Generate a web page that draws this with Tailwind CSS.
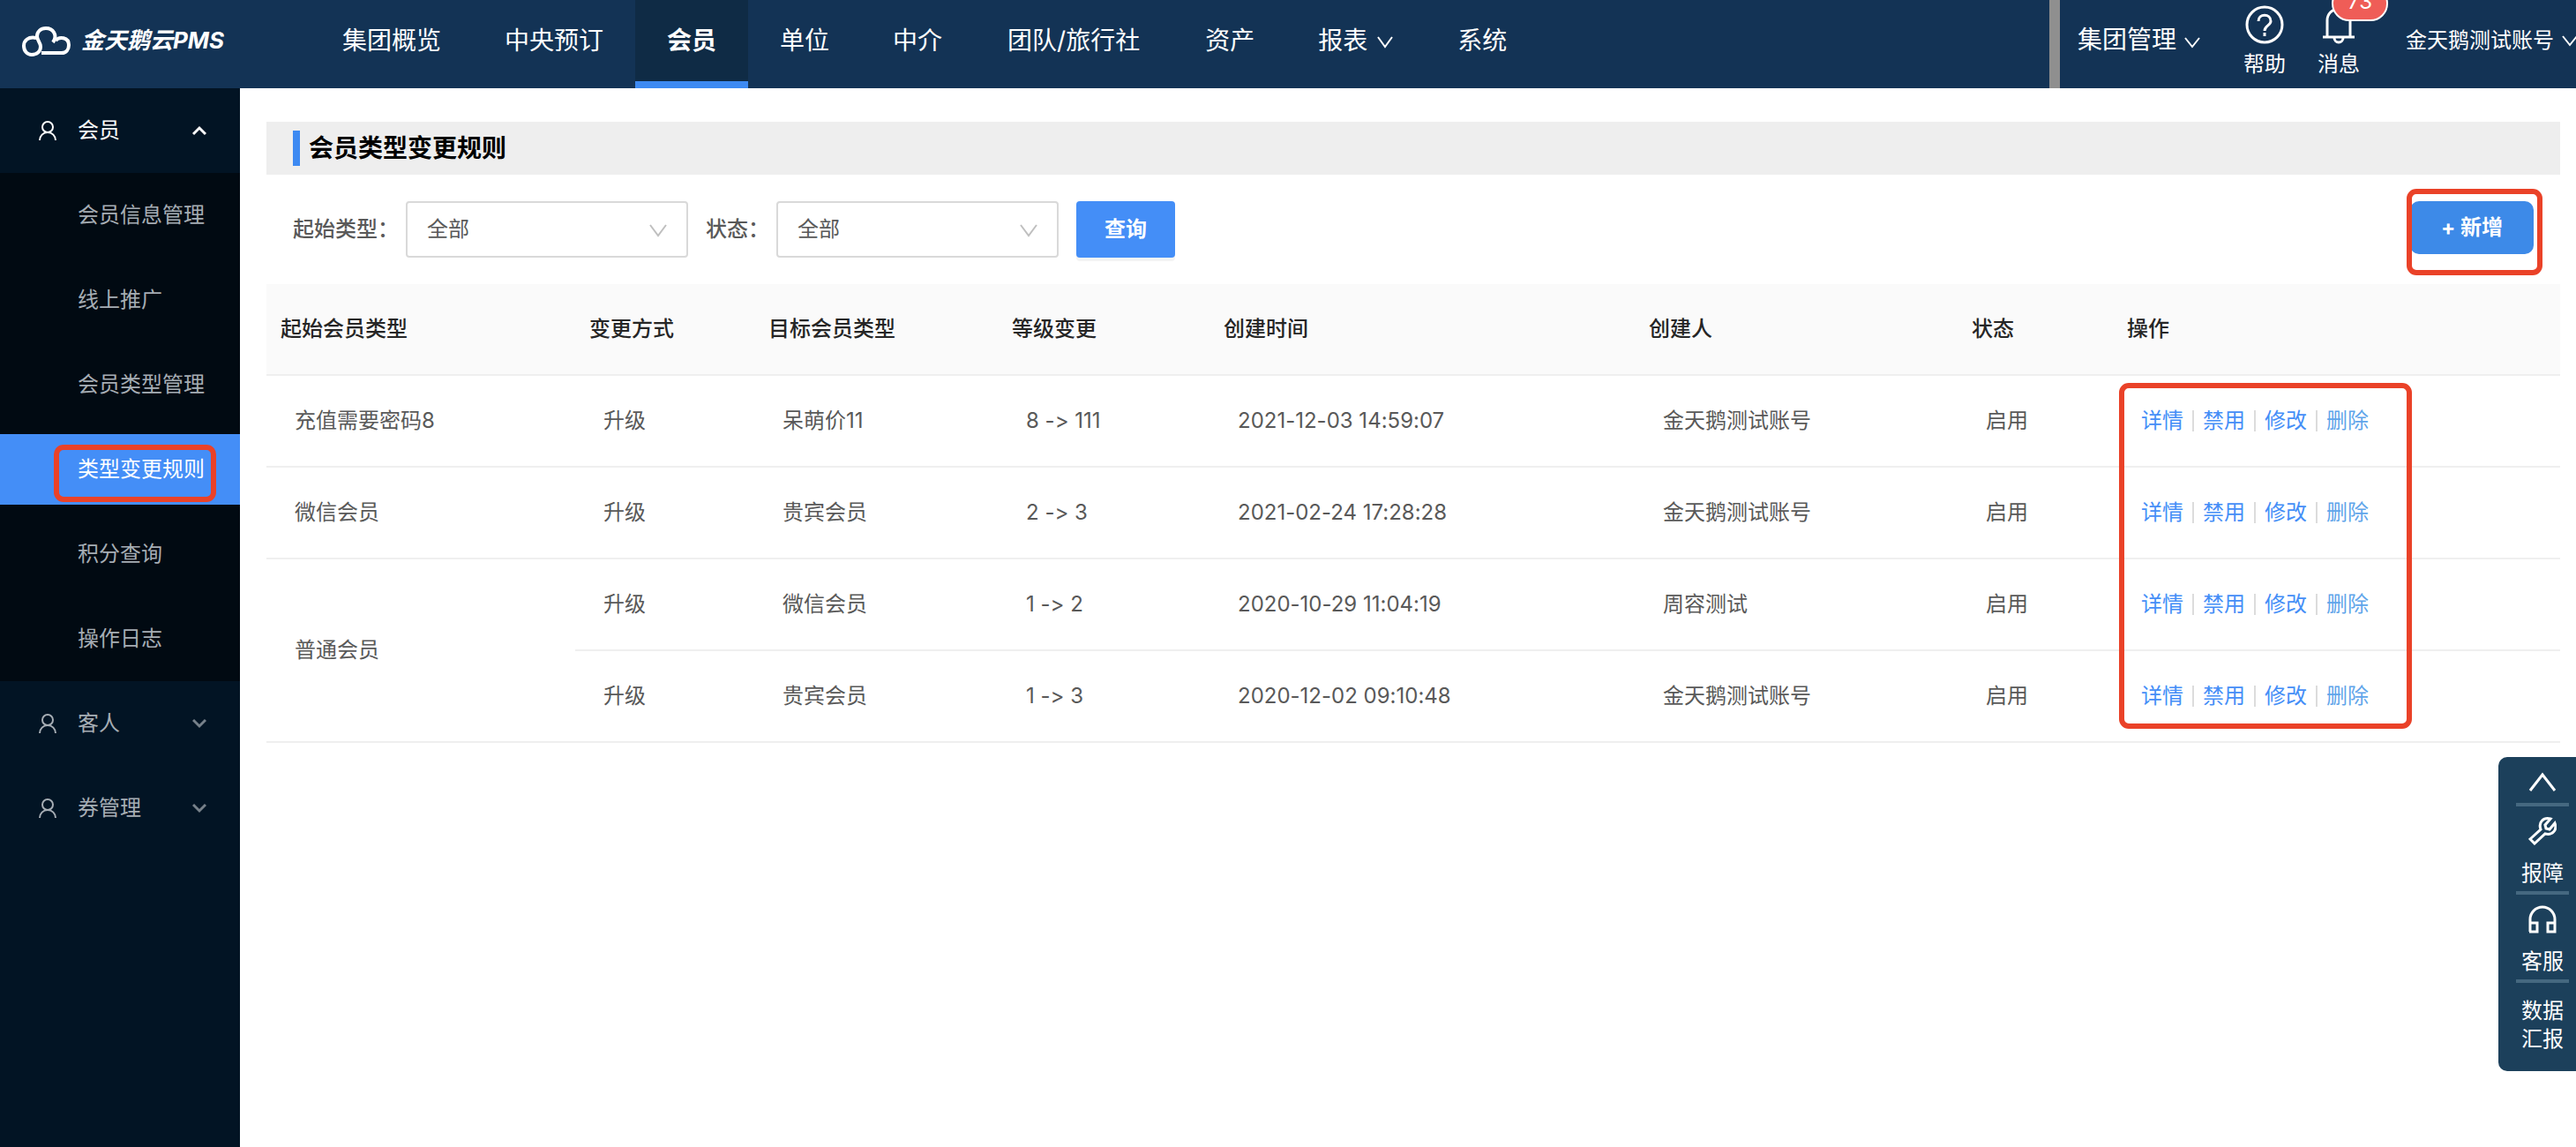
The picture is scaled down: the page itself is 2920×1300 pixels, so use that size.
<!DOCTYPE html>
<html lang="zh-CN">
<head>
    <meta charset="UTF-8">
    <meta name="viewport" content="width=device-width, initial-scale=1.0">
    <title>会员类型变更规则</title>
    <script src="https://cdn.jsdelivr.net/npm/@tailwindcss/browser@4"></script>
</head>
<body class="min-h-screen flex flex-col bg-white text-2xl text-[#595959] font-[Inter,'Noto_Sans_CJK_SC',sans-serif] [font-feature-settings:'calt'_0] overflow-x-hidden">

    <!-- Header -->
    <header class="h-[100px] flex bg-[#133355] text-white text-[28px] whitespace-nowrap">
        <a href="#" class="w-[352px] pl-6 pb-2 flex items-center gap-3">
            <svg class="w-14 h-9" viewBox="0 0 56 36" fill="none" stroke="currentColor" stroke-width="4">
                <path d="M17 15C8 13 3 18 3 24c0 6 4 10 9 10 6 0 10-4 10-9 0-5-4-7-4-12 0-5 4-9 10-9 8 0 14 8 8 16"/>
                <path d="M39 18c4-5 15-4 15 5 0 5-3 9-8 9H23"/>
            </svg>
            <span class="text-[26px] font-bold italic">金天鹅云PMS</span>
        </a>
        <nav class="flex leading-[92px]">
            <a href="#" class="px-9">集团概览</a>
            <a href="#" class="px-9">中央预订</a>
            <a href="#" class="px-9 font-bold bg-[#0f2b45] border-b-8 border-[#3d8af2]">会员</a>
            <a href="#" class="px-9">单位</a>
            <a href="#" class="px-9">中介</a>
            <a href="#" class="px-[38px]">团队/旅行社</a>
            <a href="#" class="px-9">资产</a>
            <a href="#" class="px-9 flex gap-[10px]">报表
                <svg class="w-5 h-[96px]" viewBox="0 0 20 96" fill="none" stroke="currentColor" stroke-width="2"><path d="M2 42l8 11 8-11"/></svg>
            </a>
            <a href="#" class="px-9">系统</a>
        </nav>
        <div class="ml-auto w-[597px] shrink-0 flex border-l-12 border-[#8f8f8f] pl-5">
            <button class="h-[92px] flex items-center gap-2">集团管理
                <svg class="w-5 h-6" viewBox="0 0 20 24" fill="none" stroke="currentColor" stroke-width="2"><path d="M2 9l8 10 8-10"/></svg>
            </button>
            <a href="#" class="ml-12 pt-[6px] flex flex-col items-center gap-[7px] text-2xl">
                <svg class="w-11 h-11" viewBox="0 0 44 44" fill="none" stroke="currentColor" stroke-width="3">
                    <circle cx="22" cy="22" r="20"/>
                    <path d="M15 18c0-9 14-9 14 0 0 5-7 5-7 11"/><path d="M22 31v4"/>
                </svg>
                帮助
            </a>
            <a href="#" class="relative ml-9 pt-[6px] flex flex-col items-center gap-[7px] text-2xl">
                <svg class="w-11 h-11" viewBox="0 0 44 44" fill="none" stroke="currentColor" stroke-width="3">
                    <path d="M4 36h36M9 36V17a13 13 0 0 1 26 0v19M17 37a5 5 0 0 0 10 0"/>
                </svg>
                消息
                <span class="absolute -top-4 left-4 w-16 h-10 rounded-full bg-[#ef5d57] border-2 border-white text-center leading-8">73</span>
            </a>
            <button class="ml-[52px] h-[92px] flex items-center gap-2 text-2xl">金天鹅测试账号
                <svg class="w-5 h-6 shrink-0" viewBox="0 0 20 24" fill="none" stroke="currentColor" stroke-width="2"><path d="M2 7l8 10 8-10"/></svg>
            </button>
        </div>
    </header>

    <div class="flex-1 flex">

        <!-- Sidebar -->
        <aside class="w-[272px] shrink-0 bg-[#021424] text-[#a6adb4]">
            <button class="w-full h-24 pl-11 pr-[38px] flex items-center text-white">
                <svg class="w-5 h-6 mr-6" viewBox="0 0 20 24" fill="none" stroke="currentColor" stroke-width="2"><circle cx="10" cy="8" r="6"/><path d="M1 23a9 9 0 0 1 18 0"/></svg>
                会员
                <svg class="w-4 h-4 ml-auto" viewBox="0 0 16 16" fill="none" stroke="currentColor" stroke-width="3"><path d="M1 12l7-7 7 7"/></svg>
            </button>
            <nav class="py-2 flex flex-col gap-4 bg-[#010a12] leading-[80px]">
                <a href="#" class="pl-[88px]">会员信息管理</a>
                <a href="#" class="pl-[88px]">线上推广</a>
                <a href="#" class="pl-[88px]">会员类型管理</a>
                <a href="#" class="relative pl-[88px] bg-[#448ef7] text-white">类型变更规则
                    <span class="absolute left-[61px] top-3 w-[184px] h-[65px] border-6 border-[#ea4228] rounded-[11px]"></span>
                </a>
                <a href="#" class="pl-[88px]">积分查询</a>
                <a href="#" class="pl-[88px]">操作日志</a>
            </nav>
            <button class="w-full h-24 pl-11 pr-[38px] flex items-center">
                <svg class="w-5 h-6 mr-6" viewBox="0 0 20 24" fill="none" stroke="currentColor" stroke-width="2"><circle cx="10" cy="8" r="6"/><path d="M1 23a9 9 0 0 1 18 0"/></svg>
                客人
                <svg class="w-4 h-4 ml-auto text-[#77818a]" viewBox="0 0 16 16" fill="none" stroke="currentColor" stroke-width="3"><path d="M1 4l7 7 7-7"/></svg>
            </button>
            <button class="w-full h-24 pl-11 pr-[38px] flex items-center">
                <svg class="w-5 h-6 mr-6" viewBox="0 0 20 24" fill="none" stroke="currentColor" stroke-width="2"><circle cx="10" cy="8" r="6"/><path d="M1 23a9 9 0 0 1 18 0"/></svg>
                券管理
                <svg class="w-4 h-4 ml-auto text-[#77818a]" viewBox="0 0 16 16" fill="none" stroke="currentColor" stroke-width="3"><path d="M1 4l7 7 7-7"/></svg>
            </button>
        </aside>

        <!-- Main Content -->
        <main class="flex-1 pt-[38px] pl-[30px] pr-[18px]">
            <div class="h-[60px] pl-[30px] flex items-center bg-[#eeeeee]">
                <h1 class="h-10 pl-[10px] border-l-8 border-[#3d8af2] text-[28px] leading-10 font-bold text-black">会员类型变更规则</h1>
            </div>

            <form class="h-[124px] pl-[30px] pr-[30px] flex items-center">
                <label for="startType" class="mr-2 font-medium">起始类型：</label>
                <div class="relative">
                    <select id="startType" class="w-80 h-16 px-[22px] appearance-none bg-white border-2 border-[#d9d9d9] rounded-sm">
                        <option>全部</option>
                    </select>
                    <svg class="absolute right-6 top-5 w-5 h-6 pointer-events-none" viewBox="0 0 20 24" fill="none" stroke="#bfbfbf" stroke-width="2"><path d="M1 7l9 12 9-12"/></svg>
                </div>
                <label for="status" class="ml-5 mr-2 font-medium">状态：</label>
                <div class="relative">
                    <select id="status" class="w-80 h-16 px-[22px] appearance-none bg-white border-2 border-[#d9d9d9] rounded-sm">
                        <option>全部</option>
                    </select>
                    <svg class="absolute right-6 top-5 w-5 h-6 pointer-events-none" viewBox="0 0 20 24" fill="none" stroke="#bfbfbf" stroke-width="2"><path d="M1 7l9 12 9-12"/></svg>
                </div>
                <button type="button" class="ml-5 w-28 h-16 rounded-sm bg-[#448ef7] text-white font-bold shadow-[0_4px_0_#f4f4f4]">查询</button>
                <div class="relative ml-auto mb-1">
                    <button type="button" class="w-[140px] h-[60px] rounded-[10px] bg-[#3d8ae8] text-white font-bold">+ 新增</button>
                    <span class="absolute -left-1 -top-[14px] w-[154px] h-[98px] border-6 border-[#ea4228] rounded-[11px] pointer-events-none"></span>
                </div>
            </form>

            <div class="relative">
                <table class="w-full table-fixed text-left">
                    <thead>
                        <tr class="h-[103px] bg-[#fafafa] border-b-2 border-[#efefef] text-[#262626]">
                            <th class="w-[350px] pl-4 font-medium">起始会员类型</th>
                            <th class="w-[203px] pl-4 font-medium">变更方式</th>
                            <th class="w-[276px] pl-4 font-medium">目标会员类型</th>
                            <th class="w-[240px] pl-4 font-medium">等级变更</th>
                            <th class="w-[482px] pl-4 font-medium">创建时间</th>
                            <th class="w-[366px] pl-4 font-medium">创建人</th>
                            <th class="w-[176px] pl-4 font-medium">状态</th>
                            <th class="pl-4 font-medium">操作</th>
                        </tr>
                    </thead>
                    <tbody id="rules"></tbody>
                </table>
                <span class="absolute left-[2100px] top-28 w-[332px] h-[392px] border-6 border-[#ea4228] rounded-[11px] pointer-events-none"></span>
            </div>
        </main>
    </div>

    <!-- Floating Toolbar -->
    <div class="fixed right-0 top-[858px] w-[88px] h-[356px] pl-5 pr-2 flex flex-col rounded-l-[10px] bg-[#1c405b] text-white leading-8">
        <button class="h-14 pt-1 flex items-center justify-center border-b-4 border-[#456880]">
            <svg class="w-8 h-6" viewBox="0 0 32 24" fill="none" stroke="currentColor" stroke-width="3"><path d="M2 22L16 4l14 18"/></svg>
        </button>
        <button class="h-[100px] pt-3 flex flex-col items-center gap-4 border-b-4 border-[#456880]">
            <svg class="w-8 h-8 shrink-0" viewBox="0 0 32 32" fill="none" stroke="currentColor" stroke-width="3"><path d="M2 25L14 14C11 6 17 0 25 2l-6 7 1 4 4 1 6-7c3 8-3 14-11 12L7 30z"/></svg>
            报障
        </button>
        <button class="h-[100px] pt-3 flex flex-col items-center gap-4 border-b-4 border-[#456880]">
            <svg class="w-8 h-8 shrink-0" viewBox="0 0 32 32" fill="none" stroke="currentColor" stroke-width="3"><path d="M2 30V16a14 14 0 0 1 28 0v14h-8V20h8M2 20h8v10H1"/></svg>
            客服
        </button>
        <button class="pt-4">数据<br>汇报</button>
    </div>

<script>
    // span: 同一起始类型占用的行数
    const rules = [
        { from: '充值需要密码8', span: 1, to: '呆萌价11', level: '8 -> 111', time: '2021-12-03 14:59:07', user: '金天鹅测试账号' },
        { from: '微信会员', span: 1, to: '贵宾会员', level: '2 -> 3', time: '2021-02-24 17:28:28', user: '金天鹅测试账号' },
        { from: '普通会员', span: 2, to: '微信会员', level: '1 -> 2', time: '2020-10-29 11:04:19', user: '周容测试' },
        { to: '贵宾会员', level: '1 -> 3', time: '2020-12-02 09:10:48', user: '金天鹅测试账号' }
    ];

    document.getElementById('rules').innerHTML = rules.map(rule => `
        <tr class="h-[104px]">
            ${rule.from ? `<td rowspan="${rule.span}" class="pl-8 border-b-2 border-[#efefef]">${rule.from}</td>` : ''}
            <td class="pl-8 border-b-2 border-[#efefef]">升级</td>
            <td class="pl-8 border-b-2 border-[#efefef]">${rule.to}</td>
            <td class="pl-8 border-b-2 border-[#efefef]">${rule.level.replace('>', '&gt;')}</td>
            <td class="pl-8 border-b-2 border-[#efefef]">${rule.time}</td>
            <td class="pl-8 border-b-2 border-[#efefef]">${rule.user}</td>
            <td class="pl-8 border-b-2 border-[#efefef]">启用</td>
            <td class="pl-8 border-b-2 border-[#efefef]">
                <div class="flex items-center text-[#448ef7]">
                    <a href="#">详情</a><span class="mx-[10px] w-[2px] h-6 bg-[#dcdcdc]"></span>
                    <a href="#">禁用</a><span class="mx-[10px] w-[2px] h-6 bg-[#dcdcdc]"></span>
                    <a href="#">修改</a><span class="mx-[10px] w-[2px] h-6 bg-[#dcdcdc]"></span>
                    <a href="#" class="text-[#5fa5ea]">删除</a>
                </div>
            </td>
        </tr>
    `).join('');
</script>
</body>
</html>
